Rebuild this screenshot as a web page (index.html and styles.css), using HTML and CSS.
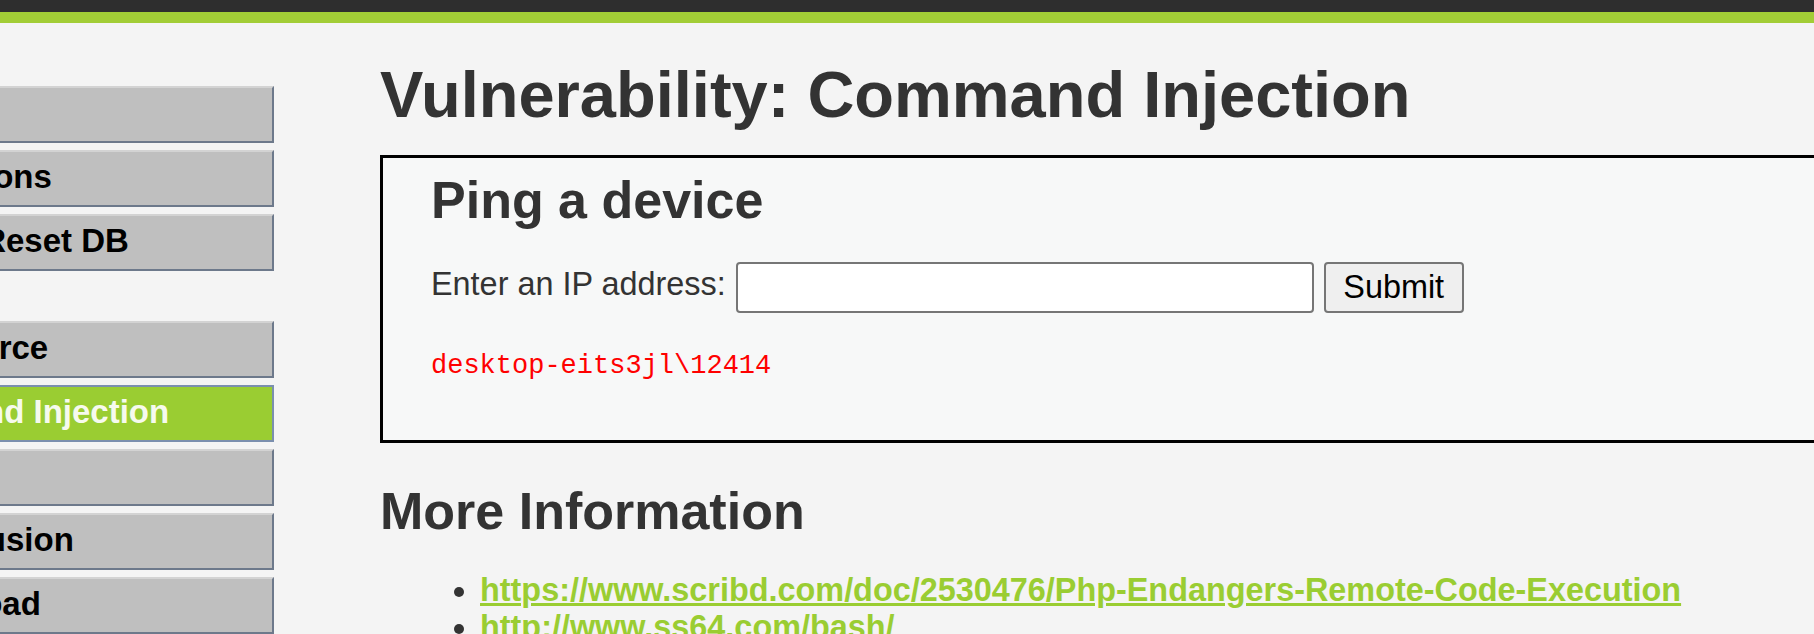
FILE: index.html
```html
<!DOCTYPE html>
<html lang="en">
<head>
<meta charset="utf-8">
<title>Vulnerability: Command Injection</title>
<link rel="stylesheet" href="styles.css">
</head>
<body>
<div class="topbar"></div>
<div class="greenbar"></div>
<div class="layout">
  <nav class="menu">
    <ul class="menu-block">
      <li><a class="menu-item" href="#">Home</a></li>
      <li><a class="menu-item" href="#">Instructions</a></li>
      <li><a class="menu-item" href="#">Setup / Reset DB</a></li>
    </ul>
    <ul class="menu-block">
      <li><a class="menu-item" href="#">Brute Force</a></li>
      <li><a class="menu-item selected" href="#">Command Injection</a></li>
      <li><a class="menu-item" href="#">CSRF</a></li>
      <li><a class="menu-item" href="#">File Inclusion</a></li>
      <li><a class="menu-item" href="#">File Upload</a></li>
    </ul>
  </nav>
  <main class="content">
    <h1 class="page-title">Vulnerability: Command Injection</h1>
    <div class="vuln-box">
      <h2 class="box-title">Ping a device</h2>
      <form class="ping-form">
        <label class="ip-label" for="ip">Enter an IP address:</label>
        <input class="ip-input" type="text" id="ip" name="ip">
        <button class="submit-btn" type="button">Submit</button>
      </form>
      <pre class="output">desktop-eits3jl\12414</pre>
    </div>
    <h2 class="section-title">More Information</h2>
    <ul class="links">
      <li><a class="ext-link" href="#">https://www.scribd.com/doc/2530476/Php-Endangers-Remote-Code-Execution</a></li>
      <li><a class="ext-link" href="#">http://www.ss64.com/bash/</a></li>
      <li><a class="ext-link" href="#">http://www.ss64.com/nt/</a></li>
    </ul>
  </main>
</div>
</body>
</html>
```

FILE: styles.css
```css
html, body {
  margin: 0;
  padding: 0;
}
body {
  background: #f4f4f4;
  font-family: "Liberation Sans", Arial, sans-serif;
  color: #333333;
  overflow: hidden;
  width: 1814px;
  height: 634px;
}
.topbar {
  height: 12px;
  background: #2e2e2e;
}
.greenbar {
  height: 11px;
  background: #a2cd36;
}
.layout {
  display: flex;
  align-items: flex-start;
}
.menu {
  flex: 0 0 auto;
  width: 434px;
  margin-left: -160px;
  padding-top: 63px;
}
.menu-block {
  list-style: none;
  margin: 0 0 50px 0;
  padding: 0;
}
.menu-block li {
  margin: 0 0 7px 0;
}
.menu-item {
  display: block;
  background: #bfbfbf;
  border-top: 2px solid #d3d3d3;
  border-left: 2px solid #d3d3d3;
  border-right: 2px solid #6d798b;
  border-bottom: 2px solid #6d798b;
  padding: 0 0 4px 21px;
  line-height: 49px;
  font-size: 33px;
  font-weight: bold;
  color: #000000;
  text-decoration: none;
  white-space: nowrap;
}
.menu-item.selected {
  background: #9acd32;
  border-color: #7b8fae;
  color: #f6faee;
}
.content {
  flex: 0 0 auto;
  margin-left: 106px;
  padding-top: 34px;
}
.page-title {
  margin: 0 0 23px 0;
  font-size: 65px;
  font-weight: bold;
  line-height: normal;
  color: #333333;
}
.vuln-box {
  width: 1500px;
  border: 3px solid #000000;
  background: #f7f8f8;
  padding: 12px 0 59px 48px;
}
.box-title {
  margin: 0 0 32px 0;
  font-size: 52px;
  font-weight: bold;
  line-height: normal;
  color: #333333;
}
.ping-form {
  display: flex;
  align-items: flex-start;
  margin: 0;
}
.ip-label {
  font-size: 32.4px;
  line-height: normal;
  margin-top: 4px;
  color: #333333;
}
.ip-input {
  box-sizing: border-box;
  width: 578px;
  height: 51px;
  margin: 0 0 0 10px;
  border: 2px solid #767676;
  border-radius: 4px;
  background: #ffffff;
  font-size: 32px;
  font-family: "Liberation Sans", Arial, sans-serif;
  padding: 0 4px;
}
.submit-btn {
  box-sizing: border-box;
  width: 140px;
  height: 51px;
  margin-left: 10px;
  border: 2px solid #767676;
  border-radius: 4px;
  background: #efefef;
  color: #000000;
  font-size: 32.4px;
  font-family: "Liberation Sans", Arial, sans-serif;
  padding: 0;
}
.output {
  margin: 38px 0 0 0;
  font-family: "Liberation Mono", "Courier New", monospace;
  font-size: 27px;
  line-height: normal;
  color: #ff0000;
}
.section-title {
  margin: 38px 0 0 0;
  font-size: 52px;
  font-weight: bold;
  line-height: normal;
  color: #333333;
}
.links {
  margin: 31px 0 0 0;
  padding-left: 100px;
  font-size: 32.4px;
  line-height: normal;
}
.ext-link {
  color: #9acd32;
  font-weight: bold;
  text-decoration: underline;
  text-decoration-thickness: 3px;
  text-underline-offset: 2px;
}
```
